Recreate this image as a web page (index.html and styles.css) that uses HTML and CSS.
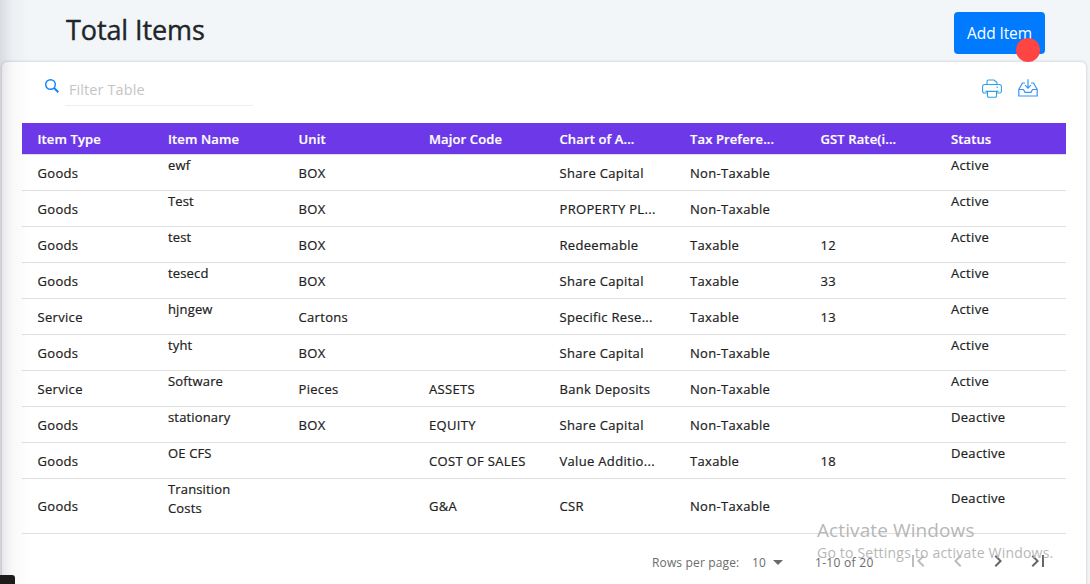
FILE: index.html
```html
<!DOCTYPE html>
<html lang="en">
<head>
<meta charset="utf-8">
<title>Total Items</title>
<link rel="stylesheet" href="styles.css">
</head>
<body>
<header class="page-head">
  <h1 class="title">Total Items</h1>
  <button class="add-btn">Add Item<span class="dot"></span></button>
</header>
<main class="card">
  <div class="toolbar">
    <svg class="search-icon" viewBox="0 0 14 14" fill="none" stroke="#0b84ff"><circle cx="5.5" cy="5.5" r="4.8" stroke-width="1.4"/><path d="M9 9l4.4 4.2" stroke-width="2"/></svg>
    <input class="filter" placeholder="Filter Table">
    <div class="tools">
      <svg width="20" height="20" viewBox="0 0 20 20" fill="none" stroke="#2fa0e0" stroke-width="1.1"><path d="M5 5.5V2.5q0-1.5 1.5-1.5H12l3 2.5v2"/><path d="M5 14H2.5Q.6 14 .6 12.200V7.500Q.6 5.500 2.600 5.500H17.400Q19.400 5.500 19.400 7.500V12.200Q19.400 14 17.500 14H15"/><path d="M3.500 12.400H16.500M5.500 12.400V17q0 1.300 1.300 1.300h6.400q1.300 0 1.300-1.300V12.400M14.500 8.200h1.500"/></svg>
      <svg width="20" height="20" viewBox="0 0 20 20" fill="none" stroke="#3b94f3" stroke-width="1.200"><path d="M7 4H4.500L.8 10.500V17H19.200V10.500L15.500 4H13M.8 10.500H5.500L7 13.300H13L14.500 10.500H19.200M10 .2V9M7 6.200L10 9.200L13 6.200"/></svg>
    </div>
  </div>
  <div class="table">
    <div class="row head"><div>Item Type</div><div>Item Name</div><div>Unit</div><div>Major Code</div><div>Chart of A...</div><div>Tax Prefere...</div><div>GST Rate(i...</div><div>Status</div></div>
    <div class="row"><div>Goods</div><div class="name">ewf</div><div>BOX</div><div></div><div>Share Capital</div><div>Non-Taxable</div><div></div><div class="status">Active</div></div>
    <div class="row"><div>Goods</div><div class="name">Test</div><div>BOX</div><div></div><div>PROPERTY PL...</div><div>Non-Taxable</div><div></div><div class="status">Active</div></div>
    <div class="row"><div>Goods</div><div class="name">test</div><div>BOX</div><div></div><div>Redeemable</div><div>Taxable</div><div>12</div><div class="status">Active</div></div>
    <div class="row"><div>Goods</div><div class="name">tesecd</div><div>BOX</div><div></div><div>Share Capital</div><div>Taxable</div><div>33</div><div class="status">Active</div></div>
    <div class="row"><div>Service</div><div class="name">hjngew</div><div>Cartons</div><div></div><div>Specific Rese...</div><div>Taxable</div><div>13</div><div class="status">Active</div></div>
    <div class="row"><div>Goods</div><div class="name">tyht</div><div>BOX</div><div></div><div>Share Capital</div><div>Non-Taxable</div><div></div><div class="status">Active</div></div>
    <div class="row"><div>Service</div><div class="name">Software</div><div>Pieces</div><div>ASSETS</div><div>Bank Deposits</div><div>Non-Taxable</div><div></div><div class="status">Active</div></div>
    <div class="row"><div>Goods</div><div class="name">stationary</div><div>BOX</div><div>EQUITY</div><div>Share Capital</div><div>Non-Taxable</div><div></div><div class="status">Deactive</div></div>
    <div class="row"><div>Goods</div><div class="name">OE CFS</div><div></div><div>COST OF SALES</div><div>Value Additio...</div><div>Taxable</div><div>18</div><div class="status">Deactive</div></div>
    <div class="row tall"><div>Goods</div><div class="name">Transition<br>Costs</div><div></div><div>G&amp;A</div><div>CSR</div><div>Non-Taxable</div><div></div><div class="status">Deactive</div></div>
  </div>
  <footer class="pager">
    <span class="rows-label">Rows per page:</span>
    <span class="rows-count">10</span>
    <svg class="caret" width="10" height="5" viewBox="0 0 10 5"><path d="M0 0h10L5 5z" fill="#6b6b6b"/></svg>
    <span class="range">1-10 of 20</span>
    <div class="nav">
      <svg class="off" viewBox="0 0 24 24"><path d="M18.410 16.590L13.820 12l4.590-4.590L17 6l-6 6 6 6zM6 6h2v12H6z"/></svg>
      <svg class="off" viewBox="0 0 24 24"><path d="M15.410 7.410L14 6l-6 6 6 6 1.410-1.410L10.830 12z"/></svg>
      <svg viewBox="0 0 24 24"><path d="M10 6L8.590 7.410 13.170 12l-4.580 4.590L10 18l6-6z"/></svg>
      <svg viewBox="0 0 24 24"><path d="M5.590 7.410L10.180 12l-4.590 4.590L7 18l6-6-6-6zM16 6h2v12h-2z"/></svg>
    </div>
  </footer>
</main>
<div class="edge-shade"></div>
<div class="corner-tab"></div>
<div class="watermark"><div class="wm-title">Activate Windows</div><div class="wm-sub">Go to Settings to activate Windows.</div></div>
</body>
</html>
```
FILE: styles.css
```css
* { box-sizing: border-box; }
body { margin: 0; height: 584px; overflow: hidden; background: #f2f6f9; font-family: "Open Sans", "Noto Sans", sans-serif; color: #212529; position: relative; }
.page-head { height: 62px; display: flex; justify-content: space-between; align-items: flex-start; padding: 12px 45px 0 66px; }
.title { margin: 0; font-size: 27px; line-height: 36px; font-weight: 500; letter-spacing: -0.1px; white-space: nowrap; -webkit-text-stroke: 0.4px #212529; }
.add-btn { position: relative; width: 91px; height: 42px; border: 0; border-radius: 4px; padding: 0; background: #007bff; color: #fff; font: 400 15.5px/42px "Open Sans", sans-serif; letter-spacing: -0.1px; white-space: nowrap; }
.dot { position: absolute; left: 62px; top: 26px; width: 24px; height: 24px; border-radius: 50%; background: #ff4444; }
.card { margin: 0 4px 0 2px; height: 530px; padding: 0 20px; background: #fff; border-radius: 5px; box-shadow: 0 0 3px rgba(50, 60, 75, 0.3); }
.toolbar { height: 61px; display: flex; align-items: flex-start; padding: 0 28.5px 0 22.5px; }
.search-icon { width: 14px; height: 14px; margin-top: 17px; }
.filter { width: 188px; height: 32px; margin: 12px 0 0 6.5px; padding: 0 4px; border: 0; border-bottom: 1px solid #eee; background: none; font: 400 14.5px "Open Sans", sans-serif; letter-spacing: 0.1px; outline: 0; }
.filter::placeholder { color: #c5c5c5; opacity: 1; }
.tools { margin: 17px 0 0 auto; display: flex; gap: 15.5px; }
.row { display: grid; grid-template-columns: repeat(8, 1fr); height: 36px; align-items: center; border-bottom: 1px solid #dfdfdf; font-size: 13px; line-height: 19px; font-weight: 500; letter-spacing: 0.32px; color: #212121; -webkit-text-stroke: 0.2px #212121; }
.row > div { padding-left: 15.500px; padding-top: 1px; white-space: nowrap; }
.row.head { height: 32px; background: #6d39e8; background-clip: padding-box; color: #fff; font-weight: 600; letter-spacing: 0.12px; -webkit-text-stroke: 0.2px #fff; }
.row.head > div { padding-top: 2px; }
.row.tall { height: 55px; }
.row > .name { align-self: start; letter-spacing: 0.15px; }
.row > .status { padding-bottom: 16px; }
.pager { height: 56px; display: flex; align-items: center; padding-right: 15px; padding-left: 630px; font-size: 12px; letter-spacing: 0.15px; color: #6b6b6b; white-space: nowrap; }
.rows-label { width: 100px; }
.rows-count { width: 21px; }
.range { margin-left: 32px; width: 91px; letter-spacing: 0.3px; }
.nav { display: flex; gap: 16px; margin-top: -3px; }
.nav svg { width: 24px; height: 24px; fill: #666; flex: none; }
.nav .off { fill: #bdbdbd; }
.edge-shade { position: absolute; left: 0; top: 0; width: 30px; height: 584px; background: linear-gradient(90deg, rgba(30, 30, 50, 0.12), rgba(30, 30, 50, 0.03) 40%, transparent); }
.corner-tab { position: absolute; left: 0; top: 575px; width: 15px; height: 9px; background: #1c1c1c; border-top-right-radius: 3px; }
.watermark { position: absolute; left: 817px; top: 518px; color: #b7b7b7; white-space: nowrap; }
.wm-title { font-size: 19px; line-height: 24px; letter-spacing: 0.1px; }
.wm-sub { font-size: 14px; line-height: 21px; letter-spacing: 0.2px; }
```
